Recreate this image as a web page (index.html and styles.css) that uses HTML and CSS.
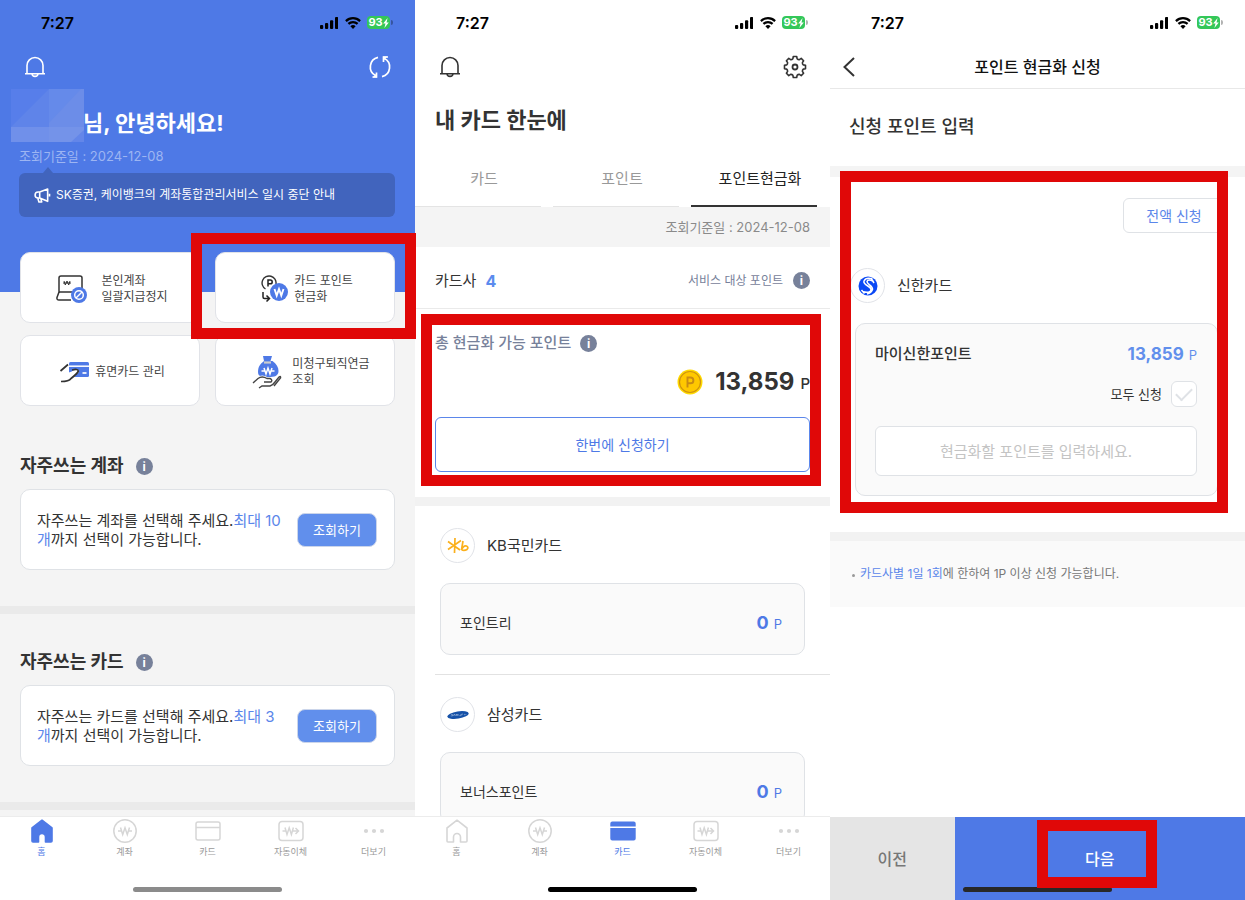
FILE: index.html
```html
<!DOCTYPE html>
<html lang="ko">
<head>
<meta charset="utf-8">
<meta name="viewport" content="width=device-width, initial-scale=1">
<title>포인트 현금화</title>
<link rel="stylesheet" href="styles.css">
</head>
<body>
<svg class="sprite" aria-hidden="true">
  <symbol id="signal" viewBox="0 0 18 12"><rect x="0" y="8" width="3.2" height="4" rx="1"/><rect x="5" y="6" width="3.2" height="6" rx="1"/><rect x="10" y="3.2" width="3.2" height="8.8" rx="1"/><rect x="15" y="0" width="3.2" height="12" rx="1"/></symbol>
  <symbol id="wifi" viewBox="0 0 16 12"><path d="M0.9 4.1a10.2 10.2 0 0 1 14.2 0M3.4 6.9a6.6 6.6 0 0 1 9.2 0" fill="none" stroke="currentColor" stroke-width="2.2"/><path d="M8 12 5.4 9.2a3.8 3.8 0 0 1 5.2 0z"/></symbol>
  <symbol id="bolt" viewBox="0 0 6 10"><path d="M4.6 0 .2 5.6h2.3L1.4 10 5.8 4.4H3.5z"/></symbol>
  <symbol id="bell" viewBox="0 0 20 22"><path d="M2 17.5V9.5a8 8 0 0 1 16 0v8M0 17.7h20M7 18c.3 3.2 5.7 3.2 6 0" fill="none" stroke="currentColor" stroke-width="1.6"/></symbol>
  <symbol id="refresh" viewBox="0 0 22 24"><g fill="none" stroke="currentColor" stroke-width="1.7"><path d="M9 2.3A9.800 9.800 0 0 0 6.500 20.500M13 21.700A9.800 9.800 0 0 0 15 3.300"/><path d="M19 2h-4.500v5M3.500 22h4v-4.500"/></g><path d="M14 1.500h4.500L14 6zM8 22.500H3.500L8 18z" fill="currentColor"/></symbol>
  <symbol id="gear" viewBox="0 0 24 24"><path d="M20.3 9.900 22.500 10.300V13.700L20.300 14.100Q19.300 15 19.400 16.400L20.600 18.200 18.200 20.600 16.400 19.400Q15 19.300 14.100 20.300L13.700 22.500H10.300L9.900 20.300Q9 19.300 7.600 19.400L5.800 20.600 3.400 18.200 4.600 16.400Q4.700 15 3.700 14.100L1.500 13.700V10.300L3.700 9.900Q4.700 9 4.600 7.600L3.400 5.800 5.800 3.400 7.600 4.600Q9 4.700 9.900 3.700L10.300 1.500H13.700L14.100 3.700Q15 4.700 16.400 4.600L18.200 3.400 20.600 5.800 19.400 7.600Q19.300 9 20.300 9.900z" fill="none" stroke="currentColor" stroke-width="1.600" stroke-linejoin="round"/><circle cx="12" cy="12" r="2.500" fill="none" stroke="currentColor" stroke-width="1.800"/></symbol>
  <symbol id="home" viewBox="0 0 24 26"><path d="M12 2.200 22 10v13q0 1-1 1h-5.500v-5a3.500 3.500 0 0 0-7 0v5H3q-1 0-1-1V10z" stroke="currentColor" stroke-width="1.600" stroke-linejoin="round"/></symbol>
  <symbol id="account" viewBox="0 0 26 26"><circle cx="13" cy="13" r="11.200" fill="none" stroke="currentColor" stroke-width="1.500"/><path d="M8.500 9.500 10.700 16.500 13 9.800l2.300 6.700 2.200-7M6 13h3.200M16.800 13H20" fill="none" stroke="currentColor" stroke-width="1.500"/></symbol>
  <symbol id="card" viewBox="0 0 26 26"><rect x="1" y="4" width="24" height="18" rx="2" fill="none" stroke="currentColor" stroke-width="1.500"/><path d="M1 9.500h24" stroke="currentColor" stroke-width="1.500"/></symbol>
  <symbol id="card-on" viewBox="0 0 26 26"><path d="M.3 8.500V5.500a2 2 0 0 1 2-2h21.400a2 2 0 0 1 2 2v3zM.3 10h25.400v10.500a2 2 0 0 1-2 2H2.300a2 2 0 0 1-2-2z"/></symbol>
  <symbol id="transfer" viewBox="0 0 26 26"><rect x="1" y="3.500" width="24" height="19" rx="3" fill="none" stroke="currentColor" stroke-width="1.500"/><path d="M7 9.500 9 16.500 11.200 9.800 13.400 16.500l2-7M4.500 13H7.500M15 13h5.500M17.500 10l3 3-3 3" fill="none" stroke="currentColor" stroke-width="1.500"/></symbol>
  <symbol id="more" viewBox="0 0 26 26"><circle cx="5" cy="13" r="2.100"/><circle cx="13" cy="13" r="2.100"/><circle cx="21" cy="13" r="2.100"/></symbol>
</svg>

<main class="screens">
  <section class="screen home" aria-label="홈">
    <div class="scroll">
      <div class="hero">
        <div class="status">
          <span class="time">7:27</span>
          <svg class="signal"><use href="#signal"/></svg><svg class="wifi"><use href="#wifi"/></svg>
          <span class="battery">93<svg><use href="#bolt"/></svg></span>
        </div>
        <div class="toolbar">
          <button class="tool" aria-label="알림"><svg class="bell"><use href="#bell"/></svg></button>
          <button class="tool" aria-label="새로고침"><svg class="refresh"><use href="#refresh"/></svg></button>
        </div>
        <h1 class="greeting">
          <svg class="mask" viewBox="0 0 73 53" aria-hidden="true"><path fill="#5f84e9" d="M0 0h73v53H0z"/><path fill="#6c8de8" d="M38 0h35v53H38z"/><path fill="#577eea" d="M0 0h38L0 38z"/><path fill="#658aea" d="M38 0h32L38 34z"/><path fill="#7796ea" d="M0 38h73v15H0z" opacity=".7"/><path fill="#6386e9" d="M60 53l13-12v12z"/></svg>
          <span>님, 안녕하세요!</span>
        </h1>
        <p class="asof">조회기준일 : 2024-12-08</p>
        <p class="bulletin">
          <svg viewBox="0 0 18 16" aria-hidden="true"><path d="M6 4.200h-1.700a3.200 3.200 0 0 0 0 6.400H6l8.500 3.600V1zM6 4.200v6.400M4 11l1.200 4h3l-1-3.500M16.500 6v3" fill="none" stroke="currentColor" stroke-width="1.700" stroke-linejoin="round"/></svg>
          <span>SK증권, 케이뱅크의 계좌통합관리서비스 일시 중단 안내</span>
        </p>
      </div>

      <nav class="quick" aria-label="바로가기">
        <a class="tile" href="#">
          <svg class="art" viewBox="0 0 32 28"><path d="M3 18V3q0-2 2-2h19q2 0 2 2v10M15 25H3q-2.500 0-2-2.500L3 17h13" fill="none" stroke="#333" stroke-width="1.500"/><path d="m8 6 1.300 4L11 6l1.700 4L14 6M7 8h8" fill="none" stroke="#333"/><circle cx="23" cy="20" r="8" fill="#4e79e6"/><circle cx="23" cy="20" r="4.300" fill="none" stroke="#fff" stroke-width="1.500"/><path d="m20 23 6-6" stroke="#fff" stroke-width="1.500"/></svg>
          <span>본인계좌<br>일괄지급정지</span>
        </a>
        <a class="tile points marked" href="#">
          <svg class="art narrow" viewBox="0 0 28 28"><path d="M4.500 14a7 7 0 1 1 10.500-5" fill="none" stroke="#333" stroke-width="1.400"/><path d="M7 11.500V5h2.300a1.900 1.900 0 0 1 0 3.800H7M2 17v5q0 1.500 1.500 1.500H8M5.500 20.500l3 3-3 3" fill="none" stroke="#222" stroke-width="1.500"/><circle cx="18" cy="17" r="9" fill="#4e79e6"/><path d="m13.500 14 2.200 6.500L18 14l2.300 6.500 2.200-6.500" fill="none" stroke="#fff" stroke-width="1.900"/></svg>
          <span>카드 포인트<br>현금화</span>
        </a>
        <a class="tile dormant" href="#">
          <svg class="art" viewBox="0 0 32 28"><rect x="10" y="4" width="20" height="15" rx="1.500" fill="#4e79e6"/><path d="M10 8.200h20" stroke="#fff" stroke-width="1.500"/><path d="M23.500 15h4" stroke="#fff" stroke-width="1.700"/><path d="M8 15q5-1 7-3 5-1 5 2l-8 8H7z" fill="#fff"/><path d="M1.500 13 9 6.500M13 12q6-1.500 6.300 1Q19 15 12 20.500 10 23.500 2 23.500" fill="none" stroke="#333" stroke-width="1.700"/></svg>
          <span>휴면카드 관리</span>
        </a>
        <a class="tile pension" href="#">
          <svg class="art" viewBox="0 0 32 34"><path d="M11 1h9l-1.500 5h2c4 3 6 6 6 10 0 5-4 6-10 6S6 22 6 17c0-5 2-8 6-11z" fill="#4e79e6"/><path d="M12 7.500h7" stroke="#ccc" stroke-width="2.200"/><path d="m12 13 2 6 2-6 2 6 2-6M9.500 16h3M19.500 16h3" fill="none" stroke="#fff" stroke-width="1.500"/><path d="M1 28l5-4.500q4-3 9 0h3q3 1.500 1 3.500h-7M7 33l3-2h8q3-1 5-4l4-5q2-1.500 1.500 1L24 29" fill="none" stroke="#fff" stroke-width="3"/><path d="M1 28l5-4.500q4-3 9 0h3q3 1.500 1 3.500h-7M7 33l3-2h8q3-1 5-4l4-5q2-1.500 1.500 1L22 31" fill="none" stroke="#444" stroke-width="1.400"/></svg>
          <span>미청구퇴직연금<br>조회</span>
        </a>
      </nav>

      <section class="favorite">
        <h2>자주쓰는 계좌 <button class="info" aria-label="계좌 도움말">i</button></h2>
        <div class="pick">
          <p>자주쓰는 계좌를 선택해 주세요.<em>최대 10개</em>까지 선택이 가능합니다.</p>
          <button class="lookup">조회하기</button>
        </div>
      </section>
      <section class="favorite">
        <h2>자주쓰는 카드 <button class="info" aria-label="카드 도움말">i</button></h2>
        <div class="pick">
          <p>자주쓰는 카드를 선택해 주세요.<em>최대 3개</em>까지 선택이 가능합니다.</p>
          <button class="lookup">조회하기</button>
        </div>
      </section>
    </div>
    <nav class="tabbar" aria-label="하단 메뉴">
      <a class="on filled" href="#"><svg><use href="#home"/></svg>홈</a>
      <a href="#"><svg><use href="#account"/></svg>계좌</a>
      <a href="#"><svg><use href="#card"/></svg>카드</a>
      <a href="#"><svg><use href="#transfer"/></svg>자동이체</a>
      <a class="filled" href="#"><svg><use href="#more"/></svg>더보기</a>
      <span class="indicator"></span>
    </nav>
  </section>

  <section class="screen cards" aria-label="내 카드">
    <div class="scroll">
      <div class="status">
        <span class="time">7:27</span>
        <svg class="signal"><use href="#signal"/></svg><svg class="wifi"><use href="#wifi"/></svg>
        <span class="battery">93<svg><use href="#bolt"/></svg></span>
      </div>
      <div class="toolbar">
        <button class="tool" aria-label="알림"><svg class="bell"><use href="#bell"/></svg></button>
        <button class="tool" aria-label="설정"><svg class="gear"><use href="#gear"/></svg></button>
      </div>
      <h1 class="page-title">내 카드 한눈에</h1>
      <nav class="tabs" aria-label="카드 메뉴">
        <a href="#">카드</a><a href="#">포인트</a><a class="current" href="#">포인트현금화</a>
      </nav>
      <p class="asof band">조회기준일 : 2024-12-08</p>
      <div class="issuers">
        <span>카드사</span><strong>4</strong>
        <span class="target">서비스 대상 포인트</span><button class="info" aria-label="서비스 대상 도움말">i</button>
      </div>
      <section class="total">
        <div class="total-box marked">
          <h2>총 현금화 가능 포인트 <button class="info" aria-label="포인트 도움말">i</button></h2>
          <p class="sum">
            <svg viewBox="0 0 26 26" aria-hidden="true"><circle cx="13" cy="13" r="12.500" fill="#ffd900"/><circle cx="13" cy="13" r="10.500" fill="#ffc800" stroke="#d0940f" stroke-width="1.200"/><path d="M10.500 18.500V8.500h3a2.900 2.900 0 0 1 0 5.800h-3" fill="none" stroke="#c98b13" stroke-width="1.900"/></svg>
            <strong>13,859</strong><b>P</b>
          </p>
          <button class="apply">한번에 신청하기</button>
        </div>
      </section>
      <section class="issuer">
        <h3><span class="avatar"><svg viewBox="0 0 22 18"><path d="M1 4.500 13 13M1 12.500 14 3.500M8 1 7.500 16M16 4 14.500 13q2-5 5-4 2.500 1.500.500 3.500-2.500 1.500-5.500.500" fill="none" stroke="#fbb01c" stroke-width="1.700"/></svg></span>KB국민카드</h3>
        <div class="points-row"><span>포인트리</span><strong>0</strong><b>P</b></div>
      </section>
      <section class="issuer">
        <h3><span class="avatar"><svg viewBox="0 0 24 12"><ellipse cx="12" cy="6" rx="11.800" ry="4" fill="#1551a8" transform="rotate(-9 12 6)"/><path d="M4 7h2V5.500H4.500M7 7l1-2 1 2M10 7V5l1 1.500L12 5v2M13.500 6.700h1.500V5.300M16 6.500V5h1.500M19 6.200V4.800M20 5.500h1" fill="none" stroke="#b9cbe6" stroke-width=".6"/></svg></span>삼성카드</h3>
        <div class="points-row"><span>보너스포인트</span><strong>0</strong><b>P</b></div>
      </section>
    </div>
    <nav class="tabbar" aria-label="하단 메뉴">
      <a href="#"><svg><use href="#home"/></svg>홈</a>
      <a href="#"><svg><use href="#account"/></svg>계좌</a>
      <a class="on filled" href="#"><svg><use href="#card-on"/></svg>카드</a>
      <a href="#"><svg><use href="#transfer"/></svg>자동이체</a>
      <a class="filled" href="#"><svg><use href="#more"/></svg>더보기</a>
      <span class="indicator"></span>
    </nav>
  </section>

  <section class="screen request" aria-label="포인트 현금화 신청">
    <div class="scroll">
      <div class="status">
        <span class="time">7:27</span>
        <svg class="signal"><use href="#signal"/></svg><svg class="wifi"><use href="#wifi"/></svg>
        <span class="battery">93<svg><use href="#bolt"/></svg></span>
      </div>
      <header class="titlebar">
        <button class="back" aria-label="뒤로"><svg viewBox="0 0 14 20"><path d="M12 1 2.500 10 12 19" fill="none" stroke="currentColor" stroke-width="2"/></svg></button>
        <h1>포인트 현금화 신청</h1>
      </header>
      <h2 class="step">신청 포인트 입력</h2>
      <form class="form" onsubmit="return false">
        <div class="form-box marked">
          <button class="all" type="button">전액 신청</button>
          <h3><span class="avatar"><svg viewBox="0 0 20 20"><circle cx="10" cy="10" r="9.500" fill="#0b49f5"/><path d="M14.500 3Q8 1 6 5c-1.500 4 7 5 7 8.500 0 3-4 3.500-8.500 2M15.500 5.500Q10 2.500 9 5.500c0 3 6 4 5.500 8-1 3-3 4-5.500 4.500M13 2l3 5M3.500 14l3 3.500" fill="none" stroke="#fff" stroke-width="1.500"/></svg></span>신한카드</h3>
          <div class="entry">
            <div class="entry-head"><span>마이신한포인트</span><strong>13,859</strong><b>P</b></div>
            <label class="every">모두 신청<input type="checkbox"></label>
            <input class="amount" type="text" inputmode="numeric" aria-label="현금화할 포인트" placeholder="현금화할 포인트를 입력하세요.">
          </div>
        </div>
      </form>
      <ul class="notes"><li><em>카드사별 1일 1회</em>에 한하여 1P 이상 신청 가능합니다.</li></ul>
    </div>
    <footer class="actions">
      <button class="prev">이전</button>
      <button class="next"><span class="marked">다음</span></button>
      <span class="indicator"></span>
    </footer>
  </section>
</main>
</body>
</html>
```

FILE: styles.css
```css
* { box-sizing: border-box; }

body, h1, h2, h3, p, ul { margin: 0; padding: 0; }
h1, h2, h3 { font-weight: 700; }
em { font-style: normal; color: #5b86ea; }
a { color: inherit; text-decoration: none; }
button, input { font: inherit; color: inherit; }
button { border: 0; background: none; padding: 0; cursor: pointer; }
svg { display: block; flex: none; }

body {
  font-family: Inter, "Noto Sans CJK KR", sans-serif;
  font-size: 15px;
  line-height: 20px;
  color: #333;
  background: #fff;
}

.sprite { position: absolute; width: 0; height: 0; }

.screens { display: grid; grid-template-columns: repeat(3, minmax(0, 1fr)); height: 100vh; }
.screen { display: flex; flex-direction: column; min-width: 0; min-height: 0; }
.scroll { flex: 1; min-height: 0; }
.home, .request { position: relative; z-index: 1; }
.cards .scroll { overflow: hidden; }

/* Red frames around the parts the guide talks about */
.marked { position: relative; }
.marked::after {
  content: "";
  position: absolute;
  z-index: 2;
  border: 11px solid #e00808;
  pointer-events: none;
}

/* Phone status bar */
.status { display: flex; align-items: center; height: 45px; padding: 0 25px 0 41px; color: #000; }
.time { flex: 1; font-size: 16px; font-weight: 600; }
.signal { width: 18px; height: 12px; margin-right: 7px; fill: currentColor; }
.wifi { width: 16px; height: 12px; margin-right: 6px; fill: currentColor; }
.battery {
  position: relative;
  display: flex; align-items: center; justify-content: center;
  width: 23px; height: 13px; border-radius: 4px;
  background: #34c759; color: #fff; font-size: 11px; font-weight: 700; line-height: 13px;
}
.battery svg { width: 6px; height: 10px; fill: currentColor; }
.battery::after {
  content: ""; position: absolute; right: -3px; top: 4px;
  width: 2px; height: 5px; border-radius: 0 2px 2px 0; background: rgba(0, 0, 0, .3);
}

.toolbar { display: flex; justify-content: space-between; height: 44px; padding: 0 23px; align-items: center; }
.tool { display: flex; }
.bell { width: 24px; height: 22px; }
.refresh { width: 24px; height: 24px; }
.gear { width: 24px; height: 24px; }

.info {
  width: 17px; height: 17px; border-radius: 50%;
  background: #77819a; color: #fff;
  font-size: 12px; font-weight: 700; line-height: 17px; text-align: center;
}

/* Home */
.home { background: #f4f4f4; }
.hero { background: #4e79e6; color: #fff; padding-bottom: 75px; }
.greeting { display: flex; align-items: center; padding-left: 11px; font-size: 22px; line-height: 32px; }
.greeting span { padding-top: 14px; }
.mask { width: 73px; height: 53px; margin-right: -1px; }
.asof { font-size: 13px; line-height: 20px; }
.hero .asof { padding: 4px 19px 0; color: #9db5f2; }
.bulletin {
  position: relative;
  display: flex; align-items: center; gap: 5px;
  margin: 7px 20px 0 19px; padding: 0 15px; min-height: 44px;
  border-radius: 6px; background: #4164bd; font-size: 12px;
}
.bulletin::before {
  content: ""; position: absolute; left: 24px; top: -6px;
  border: 5px solid transparent; border-top: 0; border-bottom: 6px solid #4164bd;
}
.bulletin svg { width: 17px; height: 15px; }

.quick { display: grid; grid-template-columns: 1fr 1fr; gap: 12px 15px; margin-top: -40px; padding: 0 20px; }
.tile {
  display: flex; align-items: center; justify-content: center; gap: 13px;
  min-height: 71px; padding: 2px 0 0 4px;
  border: 1px solid #e1e3e8; border-radius: 10px; background: #fff;
  color: #444; font-size: 12px; line-height: 16px;
}
.tile .art { width: 32px; height: 28px; }
.tile .narrow { width: 28px; }
.points { gap: 5px; }
.dormant { gap: 4px; }
.pension { gap: 8px; padding-left: 12px; }
.pension .art { height: 34px; }
.points::after { inset: -20px -22px -17px -25px; }

.favorite { padding: 48px 20px 36px; border-bottom: 8px solid #eaeaea; }
.favorite h2 { display: flex; align-items: center; gap: 12px; font-size: 18px; line-height: 24px; }
.pick {
  display: flex; align-items: center; gap: 12px;
  margin-top: 11px; padding: 0 17px 0 16px; min-height: 81px;
  border: 1px solid #dfe2e6; border-radius: 10px; background: #fff;
}
.pick p { flex: 1; line-height: 19px; word-break: break-all; }
.lookup { width: 80px; height: 34px; border: 1px solid #cbd5ea; border-radius: 8px; background: #618fec; color: #fff; font-size: 13px; }
.favorite + .favorite { padding-top: 36px; }

/* Bottom navigation */
.tabbar {
  position: relative;
  display: grid; grid-template-columns: repeat(5, 1fr);
  height: 84px; padding-top: 1px; border-top: 1px solid #ececec; background: #fff;
  color: #d6d6d6; font-size: 9px; line-height: 14px; text-align: center;
}
.tabbar a { display: block; color: #999; }
.tabbar svg { width: 26px; height: 26px; margin: 0 auto 1px; color: #d6d6d6; fill: none; }
.tabbar .filled svg { fill: #d6d6d6; }
.tabbar .on, .tabbar .on svg { color: #4e79e6; }
.tabbar .on svg { fill: #4e79e6; }
.indicator {
  position: absolute; left: 32%; bottom: 8px; z-index: 1;
  width: 36%; height: 5px; border-radius: 3px; background: #000;
}
.home .indicator { background: #8b8b8b; }

/* Card points */
.page-title { padding: 15px 20px 0; font-size: 22px; line-height: 32px; }
.tabs { display: grid; grid-template-columns: repeat(3, 1fr); gap: 12px; padding-right: 13px; margin-top: 16px; }
.tabs a { padding: 16px 0 16px 12px; border-bottom: 1px solid #e4e4e4; color: #999; line-height: 22px; text-align: center; }
.tabs .current { padding-bottom: 15px; border-bottom: 2px solid #333; color: #222; }
.band { padding: 10px 20px; background: #f4f4f4; color: #8a8a8a; text-align: right; }
.issuers { display: flex; align-items: center; height: 62px; padding: 6px 20px 0; border-bottom: 1px solid #eaeaea; }
.issuers strong { margin-left: 9px; color: #5b8bee; font-size: 16px; }
.issuers .target { margin-left: auto; margin-right: 10px; color: #77819a; font-size: 12px; }
.total { padding: 22px 20px 25px; border-bottom: 9px solid #f2f2f2; }
.total h2 { display: flex; align-items: center; gap: 9px; color: #77819a; font-size: 15px; line-height: 24px; font-weight: 500; }
.sum { display: flex; align-items: center; justify-content: flex-end; margin: 8px 0 16px; line-height: 34px; }
.sum svg { width: 26px; height: 26px; margin-right: 12px; }
.sum strong { font-size: 24px; }
.sum b { margin-left: 6px; padding-top: 4px; font-size: 15px; font-weight: 500; }
.apply { width: 100%; height: 55px; border: 1px solid #5b86ea; border-radius: 6px; color: #4e79e6; font-size: 14px; }
.total-box::after { inset: -17px -11px -14px -14px; }

.issuer { padding: 22px 25px 19px; }
.issuer + .issuer { padding-top: 23px; background: linear-gradient(#e2e2e2, #e2e2e2) 20px 0 / 100% 1px no-repeat; }
.issuer h3, .form h3 { display: flex; align-items: center; gap: 12px; font-size: 15px; font-weight: 400; }
.avatar { display: grid; place-items: center; width: 35px; height: 35px; border: 1px solid #e1e3e8; border-radius: 50%; }
.avatar svg { width: 22px; height: 20px; }
.points-row {
  display: flex; align-items: center;
  margin-top: 20px; padding: 8px 22px 0 19px; height: 72px;
  border: 1px solid #dfe2e6; border-radius: 10px; background: #fafafa; font-size: 14px;
}
.points-row strong { margin-left: auto; color: #4e79e6; font-size: 18px; }
.points-row b { margin-left: 5px; padding-top: 2px; color: #4e79e6; font-size: 13px; font-weight: 400; }

/* Request form */
.titlebar { display: grid; grid-template-columns: 48px 1fr 48px; align-items: center; height: 44px; border-bottom: 1px solid #e8e8e8; }
.titlebar h1 { color: #111; font-size: 16px; font-weight: 500; text-align: center; }
.back { padding-left: 12px; }
.back svg { width: 14px; height: 20px; }
.step { padding: 25px 20px 26px 19px; border-bottom: 11px solid #f4f4f4; font-size: 18px; line-height: 26px; font-weight: 500; }
.form { padding: 21px 20px 36px; border-bottom: 9px solid #f2f2f2; }
.all { display: block; margin-left: auto; width: 102px; height: 35px; border: 1px solid #dfe2e6; border-radius: 6px; color: #5b86ea; font-size: 14px; }
.form h3 { margin-top: 35px; }
.entry { margin: 20px 7px 0 5px; padding: 19px 20px 19px 19px; border: 1px solid #dfe2e6; border-radius: 10px; background: #fafafa; }
.entry-head { display: flex; align-items: center; font-weight: 500; }
.entry-head strong { margin-left: auto; color: #618fec; font-size: 17px; }
.entry-head b { margin-left: 5px; padding-top: 2px; color: #618fec; font-size: 13px; font-weight: 400; }
.every { display: flex; align-items: center; justify-content: flex-end; gap: 9px; margin: 16px 0 19px; font-size: 13px; }
.every input {
  appearance: none; margin: 0; width: 26px; height: 26px;
  display: grid; place-items: center;
  border: 1px solid #dfe2e6; border-radius: 6px; background: #fff;
}
.every input::before {
  content: ""; width: 14px; height: 7px; margin-bottom: 4px;
  border: solid #dfe2e6; border-width: 0 0 2px 2px; rotate: -45deg;
}
.amount { display: block; width: 100%; height: 50px; border: 1px solid #dfe2e6; border-radius: 6px; background: #fff; text-align: center; }
.amount::placeholder { color: #c4c4c4; }
.form-box::after { inset: -27px -3px -17px -10px; }
.notes { padding: 23px 20px; background: #fafafa; color: #777; font-size: 12px; list-style: none; }
.notes li { display: flex; white-space: pre; }
.notes li::before { content: ""; width: 3px; height: 3px; margin: 10px 5px 0 2px; border-radius: 50%; background: #999; }

.actions { position: relative; display: grid; grid-template-columns: 3fr 7fr; height: 83px; color: #fff; font-size: 16px; font-weight: 500; }
.prev { background: #e5e5e5; color: #777; }
.next { background: #4e79e6; color: #fff; }
.next .marked::after { inset: -29px -43px -19px -48px; }
.actions .indicator { background: #282828; z-index: 0; }
```
